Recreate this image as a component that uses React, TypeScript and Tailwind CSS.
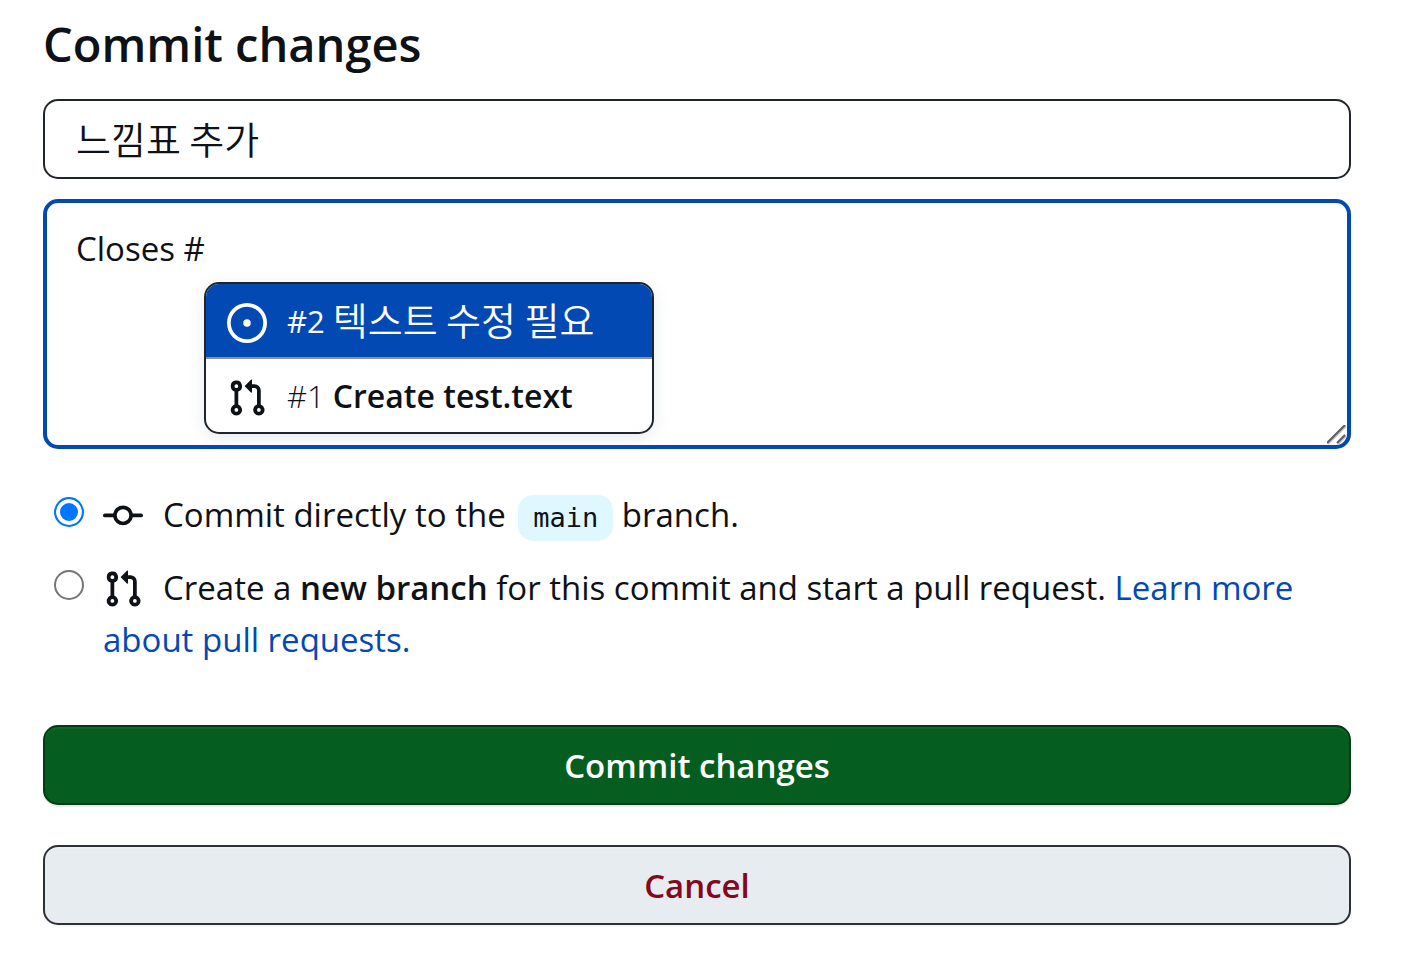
import React, { useState } from 'react';

type Target = 'direct' | 'branch';

interface IconProps {
  className?: string;
}

const IssueOpenedIcon = ({ className = '' }: IconProps) => (
  <svg
    viewBox="0 0 16 16"
    fill="currentColor"
    aria-hidden="true"
    className={`size-10 shrink-0 ${className}`}
  >
    <path d="M8 9.5a1.5 1.5 0 1 0 0-3 1.5 1.5 0 0 0 0 3Z" />
    <path d="M8 0a8 8 0 1 1 0 16A8 8 0 0 1 8 0ZM1.5 8a6.5 6.5 0 1 0 13 0 6.5 6.5 0 0 0-13 0Z" />
  </svg>
);

const PullRequestIcon = ({ className = '' }: IconProps) => (
  <svg
    viewBox="0 0 16 16"
    fill="currentColor"
    aria-hidden="true"
    className={`size-10 shrink-0 ${className}`}
  >
    <path d="M1.5 3.25a2.25 2.25 0 1 1 3 2.122v5.256a2.251 2.251 0 1 1-1.5 0V5.372A2.25 2.25 0 0 1 1.5 3.25Zm5.677-.177L9.573.677A.25.25 0 0 1 10 .854V2.5h1A2.5 2.5 0 0 1 13.5 5v5.628a2.251 2.251 0 1 1-1.5 0V5a1 1 0 0 0-1-1h-1v1.646a.25.25 0 0 1-.427.177L7.177 3.427a.25.25 0 0 1 0-.354ZM3.75 2.5a.75.75 0 1 0 0 1.5.75.75 0 0 0 0-1.5Zm0 9.5a.75.75 0 1 0 0 1.5.75.75 0 0 0 0-1.5Zm8.25.75a.75.75 0 1 0 1.5 0 .75.75 0 0 0-1.5 0Z" />
  </svg>
);

const CommitIcon = ({ className = '' }: IconProps) => (
  <svg
    viewBox="0 0 16 16"
    fill="currentColor"
    aria-hidden="true"
    className={`size-10 shrink-0 ${className}`}
  >
    <path d="M11.93 8.5a4.002 4.002 0 0 1-7.86 0H.75a.75.75 0 0 1 0-1.5h3.32a4.002 4.002 0 0 1 7.86 0h3.32a.75.75 0 0 1 0 1.5Zm-1.43-.75a2.5 2.5 0 1 0-5 0 2.5 2.5 0 0 0 5 0Z" />
  </svg>
);

// Corner grip of the description box
const ResizeGrip = () => (
  <svg
    viewBox="0 0 20 20"
    fill="none"
    strokeWidth="2"
    aria-hidden="true"
    className="pointer-events-none absolute right-1 bottom-1 size-5"
  >
    <path d="M1 19 19 1M11 19l8-8" stroke="#c4c4c4" />
    <path d="M0 18 18 0M10 18l8-8" stroke="#5c5c5c" />
  </svg>
);

const radioClass =
  'mt-2 size-[30px] shrink-0 appearance-none rounded-full border-2 border-[#767676] bg-white checked:border-[#0075ff] checked:bg-[#0075ff] checked:shadow-[inset_0_0_0_4px_white]';

export default function App() {
  const [title, setTitle] = useState('느낌표 추가');
  const [description, setDescription] = useState('Closes #');
  const [target, setTarget] = useState<Target>('direct');

  return (
    <form
      onSubmit={(e) => e.preventDefault()}
      className="bg-white pt-[14px] pr-[55px] pb-10 pl-[43px] font-['Open_Sans','Noto_Sans_CJK_KR',sans-serif] text-[33px] leading-[52px] text-[#0e1116]"
    >
      <h1 className="mb-[25px] text-[47px] leading-[60px] font-semibold">
        Commit changes
      </h1>

      <input
        type="text"
        aria-label="Commit message"
        value={title}
        onChange={(e) => setTitle(e.target.value)}
        className="mb-5 block h-20 w-full rounded-[15px] border-2 border-[#20252c] px-[31px] pb-1 font-['Noto_Sans_CJK_KR',sans-serif] text-[38px] font-[350] outline-none"
      />

      <div className="relative">
        <textarea
          aria-label="Extended description"
          value={description}
          onChange={(e) => setDescription(e.target.value)}
          className="block h-[250px] w-full resize-none rounded-[15px] border-4 border-[#0349b4] px-[29px] py-5 outline-none"
        />
        <ResizeGrip />

        {/* Issue and pull request suggestions */}
        <ul
          role="listbox"
          aria-label="Suggestions"
          className="absolute top-[83px] left-[161px] w-[450px] overflow-hidden rounded-[15px] border-2 border-[#20252c] bg-white shadow-[0_4px_16px_rgba(140,149,159,0.2)]"
        >
          <li
            role="option"
            aria-selected="true"
            className="flex h-[75px] items-center border-b-2 border-[#88929d] bg-[#0349b4] px-[21px] pt-1 text-white"
          >
            <IssueOpenedIcon className="mr-5" />
            <span className="mr-2 pb-1 text-[31px]">#2</span>
            <span className="pb-2 font-['Noto_Sans_CJK_KR',sans-serif] text-[38px] font-[350]">
              텍스트 수정 필요
            </span>
          </li>
          <li
            role="option"
            aria-selected="false"
            className="flex h-[73px] items-center px-[21px] pt-1"
          >
            <PullRequestIcon className="mr-5" />
            <span className="mr-2 pb-1 text-[31px] font-light">#1</span>
            <span className="pb-1 text-[32px] font-semibold">
              Create test.text
            </span>
          </li>
        </ul>
      </div>

      <div className="mt-10 flex flex-col gap-[21px] pl-[11px]">
        <div className="flex items-start gap-[19px]">
          <input
            type="radio"
            id="commit-direct"
            name="target"
            checked={target === 'direct'}
            onChange={() => setTarget('direct')}
            className={radioClass}
          />
          <label htmlFor="commit-direct">
            <CommitIcon className="mr-5 inline-block align-[-9px]" />
            Commit directly to the{' '}
            <code className="ml-1 inline-block rounded-[15px] bg-[#dff7ff] px-[15px] font-['DejaVu_Sans_Mono',monospace] text-[27px] leading-[46px]">
              main
            </code>{' '}
            branch.
          </label>
        </div>
        <div className="flex items-start gap-[19px]">
          <input
            type="radio"
            id="commit-branch"
            name="target"
            checked={target === 'branch'}
            onChange={() => setTarget('branch')}
            className={radioClass}
          />
          <label htmlFor="commit-branch">
            <PullRequestIcon className="mr-5 inline-block align-[-9px]" />
            Create a <strong className="font-semibold">new branch</strong> for
            this commit and start a pull request.{' '}
            <a href="#pull-requests" className="text-[#0349b4]">
              Learn more about pull requests.
            </a>
          </label>
        </div>
      </div>

      <div className="mt-[59px] flex flex-col gap-10">
        <button
          type="submit"
          className="h-20 rounded-[15px] border-2 border-[#013d14] bg-[#055d20] pt-[2px] font-semibold text-white shadow-[0_2px_1px_rgba(27,31,36,0.1),inset_0_2px_1px_rgba(255,255,255,0.06)]"
        >
          Commit changes
        </button>
        <button
          type="button"
          className="h-20 rounded-[15px] border-2 border-[#2c3037] bg-[#e7ecf0] pt-[2px] font-semibold text-[#86061d] shadow-[0_2px_1px_rgba(27,31,36,0.04),inset_0_2px_1px_rgba(255,255,255,0.25)]"
        >
          Cancel
        </button>
      </div>
    </form>
  );
}
